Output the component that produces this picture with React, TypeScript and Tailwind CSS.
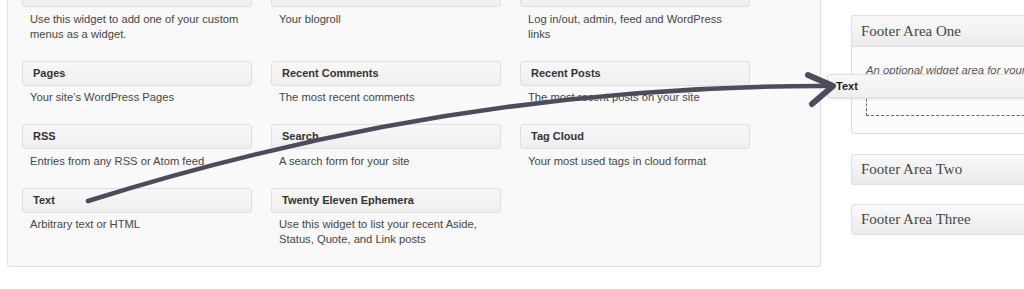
const widgets = [
  {
    title: "Custom Menu",
    desc: "Use this widget to add one of your custom menus as a widget.",
  },
  { title: "Links", desc: "Your blogroll" },
  { title: "Meta", desc: "Log in/out, admin, feed and WordPress links" },
  { title: "Pages", desc: "Your site\u2019s WordPress Pages" },
  { title: "Recent Comments", desc: "The most recent comments" },
  { title: "Recent Posts", desc: "The most recent posts on your site" },
  { title: "RSS", desc: "Entries from any RSS or Atom feed" },
  { title: "Search", desc: "A search form for your site" },
  { title: "Tag Cloud", desc: "Your most used tags in cloud format" },
  { title: "Text", desc: "Arbitrary text or HTML" },
  {
    title: "Twenty Eleven Ephemera",
    desc: "Use this widget to list your recent Aside, Status, Quote, and Link posts",
  },
];

const sans = { fontFamily: '"Liberation Sans", Arial, sans-serif' };

const WidgetBar = ({ title }: { title: string }) => (
  <div className="h-[25px] flex items-center pl-[10px] border border-[#dfdfdf] rounded-[3px] bg-linear-to-b from-[#f8f8f8] to-[#efefef] text-[11px] font-bold text-[#333]">
    {title}
  </div>
);

const AreaHeader = ({ title, rounded }: { title: string; rounded?: boolean }) => (
  <div
    className={
      "h-[31px] flex items-center pl-[9px] bg-linear-to-b from-[#f9f9f9] to-[#ebebeb] text-[15px] text-[#464646] " +
      (rounded ? "rounded-[3px] border border-[#dfdfdf]" : "border-b border-[#dfdfdf]")
    }
    style={{ fontFamily: '"Liberation Serif", Georgia, serif' }}
  >
    {title}
  </div>
);

export default function App() {
  return (
    <div className="relative w-[1024px] h-[289px] overflow-hidden bg-white" style={sans}>
      <div className="flex items-start">
        {/* available widgets panel */}
        <div className="ml-[7px] mt-[-32px] w-[814px] shrink-0 bg-[#f9f9f9] border border-[#dfdfdf] rounded-[3px] pt-[13px] pl-[14px]">
          <div className="grid grid-cols-[230px_230px_230px] gap-x-[19px]">
            {widgets.map((w) => (
              <div key={w.title} className="mb-[19px]">
                <WidgetBar title={w.title} />
                <p className="pt-[4.5px] pl-[8px] pr-[6px] text-[11.2px] leading-[15px] text-[#464646]">
                  {w.desc}
                </p>
              </div>
            ))}
          </div>
        </div>

        {/* sidebars */}
        <div className="ml-[30px] mt-[15px] w-[260px] shrink-0">
          <div className="border border-[#dfdfdf] rounded-[3px] bg-[#fcfcfc] overflow-hidden">
            <AreaHeader title="Footer Area One" />
            <div className="pl-[14px] pt-[16px] pb-[17px]">
              <p className="text-[11.3px] leading-[14px] italic text-[#555] whitespace-nowrap">
                An optional widget area for your site footer
              </p>
              <div className="mt-[17px] h-[22px] border border-dashed border-[#666]" />
            </div>
          </div>
          <div className="mt-[20px]">
            <AreaHeader title="Footer Area Two" rounded />
          </div>
          <div className="mt-[19px]">
            <AreaHeader title="Footer Area Three" rounded />
          </div>
        </div>
      </div>

      {/* widget being dragged */}
      <div className="absolute left-[827px] top-[74px] w-[260px] h-[24px] flex items-center pl-[8px] border border-[#dfdfdf] rounded-[3px] bg-linear-to-b from-[#f8f8f8] to-[#efefef] shadow-[0_1px_3px_rgba(0,0,0,0.12)] text-[11px] font-bold text-[#222]">
        Text
      </div>

      {/* hand-drawn arrow */}
      <svg
        className="absolute inset-0 pointer-events-none"
        width="1024"
        height="289"
        viewBox="0 0 1024 289"
      >
        <g fill="none" stroke="#4d4b5e" strokeLinecap="round" strokeLinejoin="round">
          <path d="M88 201 Q460 84 833 86" strokeWidth="4.5" />
          <path d="M808 75 L833 86 L812 104" strokeWidth="6" />
        </g>
      </svg>
    </div>
  );
}
